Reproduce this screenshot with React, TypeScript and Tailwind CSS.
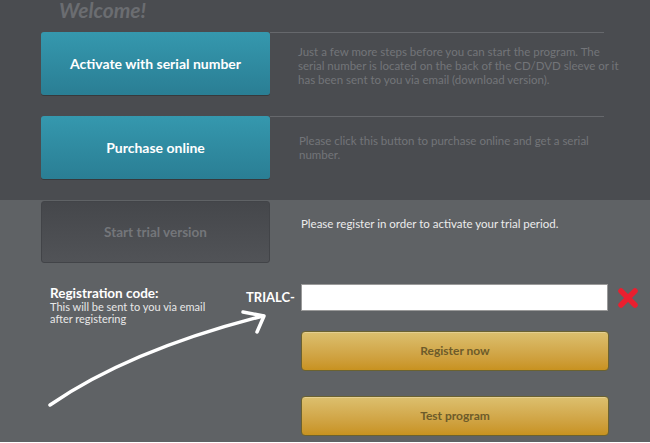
const font = { fontFamily: 'Lato, "Open Sans", sans-serif' };

function TealButton({ label }: { label: string }) {
  return (
    <button className="w-[229px] h-[63px] shrink-0 rounded-[3px] bg-gradient-to-b from-[#3598ae] to-[#2a7e94] text-white text-[14px] font-bold shadow-[0_1px_0_rgba(0,0,0,0.25)]">
      {label}
    </button>
  );
}

function GoldButton({ label }: { label: string }) {
  return (
    <button className="w-[308px] h-[40px] rounded-[4px] border border-[#6b6230] bg-gradient-to-b from-[#dcc06e] to-[#c8921f] text-[#6d5b2a] text-[12px] font-bold shadow-[inset_0_1px_0_rgba(255,255,255,0.25)]">
      {label}
    </button>
  );
}

function Arrow() {
  return (
    <svg className="absolute left-0 top-0 pointer-events-none" width="650" height="443" viewBox="0 0 650 443">
      <path d="M50 405 Q 130 350 263 316" fill="none" stroke="white" strokeWidth="3.5" strokeLinecap="round" />
      <path d="M243 312 L264 316 L257 332" fill="none" stroke="white" strokeWidth="3.5" strokeLinecap="round" strokeLinejoin="round" />
    </svg>
  );
}

export default function App() {
  return (
    <div className="relative w-[650px] h-[443px] overflow-hidden" style={font}>
      <div className="h-[201px] bg-[#4a4c50] pl-[41px]">
        <div className="h-[33px] pl-[18px]">
          <span className="block text-[21px] italic font-bold text-[#6b6d71] leading-[22px] -mt-[1px]">Welcome!</span>
        </div>
        <div className="flex">
          <TealButton label="Activate with serial number" />
          <div className="w-[334px] border-t border-[#66686c] pl-[28px] pt-[12px]">
            <p className="w-[326px] text-[11.5px] leading-[14px] text-[#737579]">
              Just a few more steps before you can start the program. The serial number is located on the back of the CD/DVD sleeve or it has been sent to you via email (download version).
            </p>
          </div>
        </div>
        <div className="flex mt-[21px]">
          <TealButton label="Purchase online" />
          <div className="w-[334px] border-t border-[#66686c] pl-[29px] pt-[17px]">
            <p className="w-[310px] text-[11.5px] leading-[14px] text-[#737579]">
              Please click this button to purchase online and get a serial number.
            </p>
          </div>
        </div>
      </div>
      <div className="h-[242px] bg-[#5f6265] pl-[41px] pt-px">
        <div className="flex">
          <button className="w-[229px] h-[62px] shrink-0 rounded-[3px] border border-[#424448] bg-gradient-to-b from-[#45474b] to-[#515357] text-[#74767a] text-[13.5px] font-bold">
            Start trial version
          </button>
          <p className="pl-[31px] pt-[16px] text-[11.5px] leading-[14px] text-[#ececec]">
            Please register in order to activate your trial period.
          </p>
        </div>
        <div className="flex mt-[21px]">
          <div className="w-[205px] pl-[9px] pt-[2px] text-white">
            <div className="text-[13.5px] font-bold leading-[15px]">Registration code:</div>
            <div className="text-[11px] leading-[12px] text-[#e8e8e8]">
              This will be sent to you via email
              <br />
              after registering
            </div>
          </div>
          <div className="w-[55px] pt-[5px] text-[13px] font-bold text-white leading-[16px]">TRIALC-</div>
          <div className="flex flex-col gap-[20px]">
            <div className="flex items-center gap-[9px]">
              <input className="w-[307px] h-[27px] bg-white border border-[#9a9a9a] outline-none" />
              <svg width="22" height="22" viewBox="0 0 22 22">
                <path d="M4 4 L18 18 M18 4 L4 18" stroke="#ea1f2f" strokeWidth="5.5" strokeLinecap="round" />
              </svg>
            </div>
            <GoldButton label="Register now" />
            <div className="mt-[5px]">
              <GoldButton label="Test program" />
            </div>
          </div>
        </div>
      </div>
      <Arrow />
    </div>
  );
}
